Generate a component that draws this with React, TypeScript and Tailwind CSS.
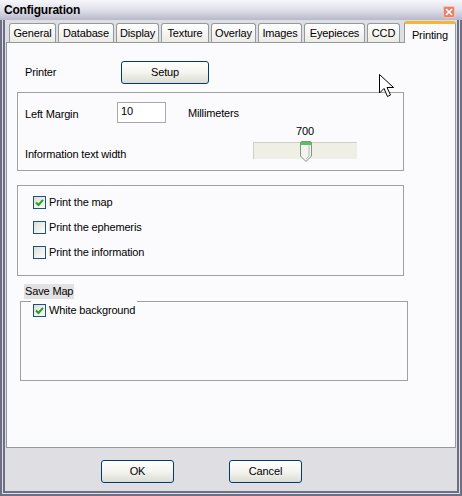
import React from "react";

const tabs = [
  { name: "General", w: 47 },
  { name: "Database", w: 56 },
  { name: "Display", w: 43 },
  { name: "Texture", w: 48 },
  { name: "Overlay", w: 45 },
  { name: "Images", w: 44 },
  { name: "Eyepieces", w: 61 },
  { name: "CCD", w: 33 },
];

function XpButton({ label, className }: { label: string; className: string }) {
  return (
    <button
      className={`h-[23px] rounded-[3px] border border-[#003c74] bg-gradient-to-b from-white via-[#f4f4f0] to-[#dcdcd4] text-[11px] text-black ${className}`}
    >
      {label}
    </button>
  );
}

function CheckBox({ checked }: { checked?: boolean }) {
  return (
    <span className="w-[13px] h-[13px] border border-[#1c5180] bg-gradient-to-br from-[#dcdcd7] to-white flex items-center justify-center shrink-0">
      {checked && (
        <svg width="9" height="9" viewBox="0 0 9 9">
          <path d="M1 4.5 L3.5 7 L8 1.8" fill="none" stroke="#21a121" strokeWidth="2" />
        </svg>
      )}
    </span>
  );
}

function CheckRow({ label, checked }: { label: string; checked?: boolean }) {
  return (
    <div className="flex items-center gap-[3px] h-[14px] whitespace-nowrap">
      <CheckBox checked={checked} />
      <span>{label}</span>
    </div>
  );
}

export default function App() {
  return (
    <div className="w-[462px] h-[496px] flex flex-col bg-[#dfdfe3] text-[11px] tracking-[-0.15px] text-black font-['Liberation_Sans',Arial,sans-serif] relative overflow-hidden">
      {/* title bar */}
      <div className="h-[20px] shrink-0 flex items-center justify-between pl-[4px] pr-[7px] bg-gradient-to-b from-[#f6f6fa] via-[#e0e0ea] to-[#b8b8cc]">
        <span className="text-[12px] font-bold tracking-[-0.2px]">Configuration</span>
        <span className="w-[12px] h-[12px] mt-[3px] rounded-[2px] border border-[#f3c3b8] bg-[#e4806c] flex items-center justify-center">
          <svg width="8" height="8" viewBox="0 0 8 8">
            <path d="M1 1 L7 7 M7 1 L1 7" stroke="white" strokeWidth="1.6" />
          </svg>
        </span>
      </div>

      <div className="flex-1 flex flex-col border-x-[5px] border-b-[5px] border-double border-[#6e6e86] px-[1px]">
        {/* tabs */}
        <div className="h-[22px] flex items-end pl-[3px] gap-[2px]">
          {tabs.map((t) => (
            <div
              key={t.name}
              style={{ width: t.w }}
              className="h-[19px] flex items-center justify-center rounded-t-[3px] border border-b-0 border-[#919b9c] bg-gradient-to-b from-white to-[#ecebe6]"
            >
              {t.name}
            </div>
          ))}
          <div className="w-[52px] h-[22px] ml-[2px] -mb-px z-10 flex items-start pt-[3px] justify-center rounded-t-[3px] border border-b-0 border-[#919b9c] border-t-[3px] border-t-[#f5b53a] bg-[#fbfbfd]">
            Printing
          </div>
        </div>

        {/* panel */}
        <div className="h-[406px] shrink-0 border border-[#919b9c] bg-[#fbfbfd] pl-[10px] pt-[18px] flex flex-col whitespace-nowrap">
          <div className="flex items-center h-[23px]">
            <span className="ml-[8px] w-[96px]">Printer</span>
            <XpButton label="Setup" className="w-[88px]" />
          </div>

          <div className="mt-[8px] w-[387px] h-[79px] border border-[#a0a0a0] pl-[7px] pt-[9px] flex flex-col">
            <div className="flex items-center h-[21px]">
              <span className="w-[92px] pt-[3px]">Left Margin</span>
              <div className="w-[49px] h-[21px] border border-[#a8a8a8] bg-white pl-[3px] leading-[16px]">10</div>
              <span className="ml-[22px] pt-[2px]">Millimeters</span>
            </div>
            <div className="flex items-end">
              <span className="w-[228px] -mb-[4px]">Information text width</span>
              <div className="flex flex-col items-center w-[104px]">
                <span className="mb-[2px]">700</span>
                <div className="w-[104px] h-[17px] bg-[#efefe6] border-l border-t border-[#cfcfc8] relative">
                  <svg className="absolute left-[46px] -top-[2px]" width="12" height="21" viewBox="0 0 12 21">
                    <path d="M0.5 2 Q0.5 0.5 2 0.5 L10 0.5 Q11.5 0.5 11.5 2 L11.5 15 L6 20.5 L0.5 15 Z" fill="#f3f3ef" stroke="#7b9a7b" />
                    <rect x="1" y="1" width="10" height="3" fill="#5cc05c" />
                    <path d="M9 4 L9 15 L6 18" fill="none" stroke="#b8b8c4" />
                  </svg>
                </div>
              </div>
            </div>
          </div>

          <div className="mt-[14px] w-[387px] h-[91px] border border-[#a0a0a0] pl-[15px] pt-[9px] flex flex-col gap-[11px]">
            <CheckRow label="Print the map" checked />
            <CheckRow label="Print the ephemeris" />
            <CheckRow label="Print the information" />
          </div>

          <div className="mt-[8px] ml-[7px] w-[50px] h-[15px] bg-[#e2e2e2] flex items-center pl-px">Save Map</div>

          <div className="mt-[2px] ml-[3px] w-[388px] h-[80px] border border-[#a0a0a0] pl-[10px] flex flex-col">
            <div className="-mt-px w-[106px] h-[19px] bg-[#fbfbfd] flex items-center pl-[2px]">
              <div className="flex items-center gap-[3px]">
                <CheckBox checked />
                <span>White background</span>
              </div>
            </div>
          </div>
        </div>

        {/* footer */}
        <div className="flex-1 flex items-start pt-[12px] pl-[95px] gap-[55px]">
          <XpButton label="OK" className="w-[73px]" />
          <XpButton label="Cancel" className="w-[73px]" />
        </div>
      </div>

      {/* mouse cursor */}
      <svg className="absolute left-[379px] top-[74px]" width="18" height="27" viewBox="0 0 18 27">
        <path d="M0.5 0.5 L0.5 19 L5 14.5 L8.5 22.5 L11.5 21 L8 13.5 L14.5 13.5 Z" fill="white" stroke="black" />
      </svg>
    </div>
  );
}
